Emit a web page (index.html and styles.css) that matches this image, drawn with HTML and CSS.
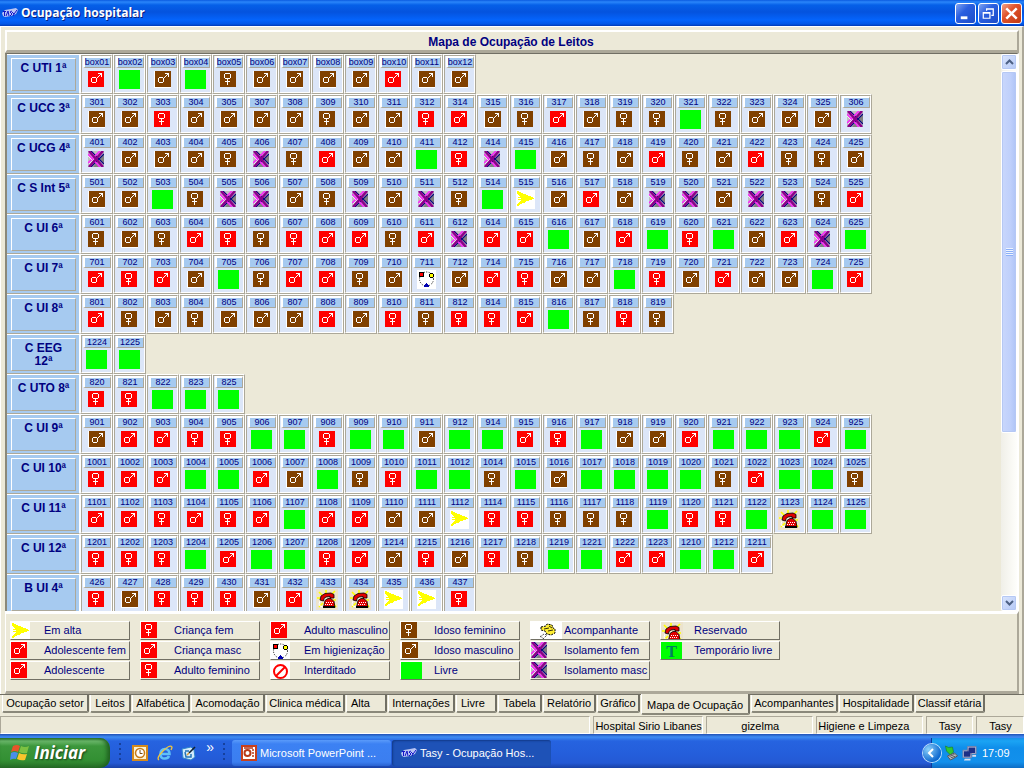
FILE: index.html
```
<!DOCTYPE html>
<html lang="pt-BR">
<head>
<meta charset="utf-8">
<title>Ocupação hospitalar</title>
<link rel="stylesheet" href="styles.css">
</head>
<body>
<svg class="sprite" aria-hidden="true">
  <symbol id="male" viewBox="0 0 16 16">
    <g fill="none" stroke="#fff" shape-rendering="crispEdges">
      <path d="M4 6.500h4M4 11.500h4M3.500 7v4M8.500 7v4"/>
      <path d="M9 6.500h1M10 5.500h1M11 4.500h1M12 3.500h1M10 2.500h4M13.500 2v4"/>
    </g>
  </symbol>
  <symbol id="female" viewBox="0 0 16 16">
    <g fill="none" stroke="#fff" shape-rendering="crispEdges">
      <path d="M5 2.500h5M5 7.500h5M4.500 3v4M10.500 3v4"/>
      <path d="M7.500 8v6M5 10.500h5"/>
    </g>
  </symbol>
  <symbol id="cross" viewBox="0 0 16 16">
    <path fill="#c0c0c0" d="M0 0h16v16H0z"/>
    <path fill="#808080" d="M10 8l6-5v10zM5 16l3-4 3 4z"/>
    <g fill="none">
      <path stroke="#000080" stroke-width="1.200" d="M3 0l13 13M16 3L3 16"/>
      <path stroke="#ff20ff" stroke-width="1.500" d="M0 3l12 13M12 0L0 12"/>
      <path stroke="#fff" stroke-width=".7" d="M0 5l4 4M2 0l5 5M1 13l5-5"/>
      <path stroke="#8a008a" stroke-width="2.600" d="M1 0l14 16M15 0L1 16"/>
    </g>
  </symbol>
  <symbol id="leave" viewBox="0 0 19 19">
    <path fill="#fff" d="M0 0h19v19H0z"/>
    <path fill="#ff0" shape-rendering="crispEdges" d="M1 1h2v1h2v1h2v1h3v1h2v1h3v1h2v1h1v1h-2v1h-3v1h-3v1H9v1H6v1H4v1H3v1H1v-2h1v-1h1v-1h1v-1h1v-1H2V9h3V8H2V7h2V6H3V5H2V4H1z"/>
  </symbol>
  <symbol id="clean" viewBox="0 0 19 19">
    <path fill="#fff" d="M0 0h19v19H0z"/>
    <circle cx="9.500" cy="9" r="7" fill="none" stroke="#000" stroke-dasharray="1 1.500"/>
    <g shape-rendering="crispEdges">
      <path fill="#000" d="M2 2h5v5H2z"/><path fill="#f00" d="M3 3h3v3H3z"/>
      <path fill="#000" d="M13 3h3v1h1v3h-1v1h-3V7h-1V4h1z"/><path fill="#ff0" d="M13 4h3v3h-3z"/>
      <path fill="#0000b0" d="M9 13h1v1h1v1h1v2H7v-2h1v-1h1z"/>
    </g>
  </symbol>
  <symbol id="phone" viewBox="0 0 22 21">
    <path fill="#ece3cc" d="M0 0h22v21H0z"/>
    <path stroke="#ff0" stroke-width="1.600" d="M3 3l4 4M10 1v4M19 2l-4 4M17 11h3M17 14l3 4M3 18l4-4M1 9h3"/>
    <path fill="#e00000" stroke="#000" stroke-width=".8" d="M4 11l1-4 4-2.500 6-.5 3 1.500V9h-4V7.500L10 8 8 9.500 7.500 12z"/>
    <path fill="#e00000" stroke="#000" stroke-width=".8" d="M9 11.500l3-2h3l3 3 1 6H7.500z"/>
    <path fill="#000" d="M7 17h12v2H7z"/>
    <path fill="none" stroke="#fff" d="M4 12l-1 3 1 2 3 1"/>
    <path stroke="#fff" stroke-dasharray="1 1" d="M10 13.500h7M9 15.500h8"/>
  </symbol>
  <symbol id="forbidden" viewBox="0 0 19 19">
    <path fill="#fff" d="M0 0h19v19H0z"/>
    <circle cx="9.500" cy="9.500" r="6.500" fill="none" stroke="#f00" stroke-width="2"/>
    <path stroke="#f00" stroke-width="2" d="M5 14l9-9"/>
  </symbol>
  <symbol id="companion" viewBox="0 0 31 18">
    <path fill="#fff" d="M0 0h31v18H0z"/>
    <path fill="#fe3" stroke="#000" stroke-dasharray="2 1" d="M10 5l5-1 1-2 5 1 1 3 2 1v4l-4 2-4-1-2-3-4-1z"/>
    <path fill="none" stroke="#000" stroke-width=".8" d="M13 7l5-1M17 9l5-1M18 4l3 2"/>
    <path fill="none" stroke="#555" stroke-dasharray="2 1" d="M9 15l4-3 3 1-4 4M9 14l4 3"/>
  </symbol>
  <symbol id="tasy" viewBox="0 0 16 10">
    <path fill="#b9c4f4" d="M0 5l3-3 6-1 5-1 2 2-2 4-5 2-6 1-2-1z"/>
    <path fill="none" stroke="#1515c8" d="M1 3.500h3M2.500 4v4M4 8l2-5 1 5M10 3l-2 1 2 2-2 2M10 4l2 2 3-4M12 6l-1 2"/>
  </symbol>
</svg>

<header class="titlebar">
  <svg class="app-icon" viewBox="0 0 16 10"><use href="#tasy"/></svg>
  <h1>Ocupação hospitalar</h1>
  <button class="win-btn" aria-label="Minimizar"><svg viewBox="0 0 20 20"><path fill="#fff" d="M5 13h7v3H5z"/></svg></button>
  <button class="win-btn" aria-label="Restaurar"><svg viewBox="0 0 20 20"><path fill="none" stroke="#fff" stroke-width="1.300" d="M4.500 9h7v6h-7zM4 9.500h8M8 7V5h7v7h-2M8 5.500h7"/></svg></button>
  <button class="win-btn close" aria-label="Fechar"><svg viewBox="0 0 20 20"><path stroke="#fff" stroke-width="2.600" d="M4.500 4.500l11 11M15.500 4.500l-11 11"/></svg></button>
</header>

<main class="window">
  <h2 class="map-title">Mapa de Ocupação de Leitos</h2>
  <div class="map">
    <div class="wards" id="wards"></div>
    <div class="scrollbar">
      <button class="scroll-btn" aria-label="Rolar para cima"><svg viewBox="0 0 9 6"><path fill="none" stroke="#4d6185" stroke-width="2" d="M1 5l3.500-3.500L8 5"/></svg></button>
      <div class="thumb"><span class="grip"></span></div>
      <button class="scroll-btn down" aria-label="Rolar para baixo"><svg viewBox="0 0 9 6"><path fill="none" stroke="#4d6185" stroke-width="2" d="M1 1l3.500 3.500L8 1"/></svg></button>
    </div>
  </div>
  <section class="legend-panel" aria-label="Legenda">
    <ul class="legend" id="legend"></ul>
  </section>
</main>

<nav class="tabs">
  <button>Ocupação setor</button><button>Leitos</button><button>Alfabética</button><button>Acomodação</button><button>Clinica médica</button><button class="start">Alta</button><button>Internações</button><button class="start">Livre</button><button>Tabela</button><button>Relatório</button><button>Gráfico</button><button class="active">Mapa de Ocupação</button><button>Acompanhantes</button><button>Hospitalidade</button><button>Classif etária</button>
</nav>

<div class="status">
  <span></span><span>Hospital Sirio Libanes</span><span class="mid">gizelma</span><span>Higiene e Limpeza</span><span class="mid">Tasy</span><span class="mid">Tasy</span>
</div>

<footer class="taskbar">
  <button class="start-btn">
    <svg viewBox="0 0 20 18"><path fill="#e8542a" d="M3 2q4-2 7 0L8 8q-3-2-7 0z"/><path fill="#7cc142" d="M11 2q4 2 8 0l-2 7q-4 1-8-1z"/><path fill="#4a8ee8" d="M1 9q3-2 7 0l-2 6q-3-1-6 1z"/><path fill="#f9c52c" d="M9 9q4 2 8 1l-2 6q-4 1-8-1z"/></svg>
    <span>Iniciar</span>
  </button>
  <div class="quick">
    <span class="dots"></span>
    <a href="#" aria-label="Outlook"><svg viewBox="0 0 16 16"><path fill="#d58a1c" d="M0 0h16v16H0z"/><path fill="#fdf3d3" d="M2 2h12v12H2z"/><circle cx="8" cy="8" r="4.500" fill="#fff" stroke="#c77a18" stroke-width="1.500"/><path fill="none" stroke="#7b4a10" d="M8 5v3.500h2.500"/></svg></a>
    <a href="#" aria-label="Internet Explorer"><svg viewBox="0 0 16 16"><path fill="none" stroke="#5fc0f8" stroke-width="2.600" d="M4 9h8.500q0-5-4.500-5T3.500 9 8 13.500q3 0 4-2.500"/><path fill="none" stroke="#f2c43c" stroke-width="1.300" d="M2 15Q-1 13 6 6t9-4q0 1-1 3"/></svg></a>
    <a href="#" aria-label="Área de trabalho"><svg viewBox="0 0 16 16"><path fill="#d4ecfc" stroke="#2f86cc" d="M1 4l9-2 3 3 1 7-4 3-8-2z"/><path fill="none" stroke="#2476b8" stroke-width="1.500" d="M4 6h4M4 7l1 5h5V9"/><path stroke="#123" stroke-width="1.600" d="M8 8l6-6"/><path stroke="#e0a030" stroke-width="1.500" d="M6 10l2-2"/></svg></a>
    <span class="more">»</span>
    <span class="dots"></span>
  </div>
  <button class="task">
    <svg viewBox="0 0 16 16"><path fill="#c8401c" d="M0 0h16v16H0z"/><path fill="#fff" d="M2 2h12v12H2z"/><circle cx="6.500" cy="8" r="3" fill="none" stroke="#b83a1a" stroke-width="2"/><path stroke="#b83a1a" stroke-width="1.500" d="M11 5h2M11 8h2M11 11h2M3 3h9"/></svg>
    <span>Microsoft PowerPoint ...</span>
  </button>
  <button class="task current">
    <svg viewBox="0 0 16 10"><use href="#tasy"/></svg>
    <span>Tasy - Ocupação Hos...</span>
  </button>
  <div class="tray">
    <button class="chevron" aria-label="Mostrar ícones"><svg viewBox="0 0 18 18"><path fill="none" stroke="#fff" stroke-width="2" d="M10 5L6 9l4 4"/></svg></button>
    <svg viewBox="0 0 14 16"><path fill="#2fc832" stroke="#1b7a20" stroke-width=".6" d="M1 1l3 1.500L8 2l1 5-3 3-4-4z"/><path fill="#c7ccd0" stroke="#555" d="M3 11l7-3 3 3-7 4z"/><path stroke="#555" d="M5 11.500l5-2M6 13l5-2"/></svg>
    <svg viewBox="0 0 16 16"><path fill="#cfd4e6" stroke="#777fa6" d="M6 1h9v8H6zM1 5h9v8H1z"/><path fill="#1d2f86" d="M7 2h7v6H7zM2 6h7v6H2z"/><path fill="#d9deee" d="M3 14h6v2H2zM11 10h4v2h-4z"/></svg>
    <time>17:09</time>
  </div>
</footer>
<script src="app.js"></script>
</body>
</html>
```
FILE: styles.css
```
* { box-sizing: border-box; }

body {
  margin: 0;
  height: 100vh;
  display: flex;
  flex-direction: column;
  overflow: hidden;
  background: #ece9d8;
  color: #000;
  font: 11px/13px "Liberation Sans", Arial, sans-serif;
}

button { font: inherit; color: inherit; margin: 0; padding: 0; border: 0; background: none; }
svg { display: block; flex: none; }
.sprite { position: absolute; width: 0; height: 0; }

/* title bar */
.titlebar {
  flex: none;
  height: 26px;
  display: flex;
  align-items: center;
  gap: 2px;
  padding: 0 2px;
  background: linear-gradient(#0a5be0 0, #2a86fa 2px, #0560e8 5px, #0453de 12px, #0464fc 20px, #0357e6 24px, #0139b4);
}
.app-icon { width: 16px; height: 10px; }
.titlebar h1 {
  flex: 1;
  margin: 0 0 0 1px;
  color: #fff;
  font: bold 12px/18px "Open Sans", sans-serif;
  text-shadow: 1px 1px #0a1f80;
}
.win-btn {
  width: 21px;
  height: 21px;
  border: 1px solid #fff;
  border-radius: 3px;
  background: linear-gradient(135deg, #7fa4f2, #2a5fe0 40%, #1c4cc8);
}
.win-btn svg { width: 19px; height: 19px; }
.win-btn.close { background: linear-gradient(135deg, #f0a288, #e0532c 40%, #c23a12); }

/* window body */
.window {
  flex: 1;
  min-height: 0;
  display: flex;
  flex-direction: column;
  padding: 3px 3px 0 4px;
  border: solid #fff;
  border-width: 1px 0 0 1px;
  border-right: 2px solid #aca899;
}
.map-title {
  flex: none;
  margin: 0;
  height: 23px;
  padding-right: 2px;
  border: solid;
  border-width: 2px 2px 3px;
  border-color: #fff #aca899 #aca899 #fff;
  color: #000080;
  text-align: center;
  font: bold 12px/20px "Liberation Sans", Arial, sans-serif;
}
.map {
  flex: 1;
  min-height: 0;
  display: flex;
  border: solid #716f64;
  border-width: 1px 0 0 2px;
  border-left-color: #8a887a;
  border-right: 2px solid #fff;
}
.wards { flex: 1; min-width: 0; overflow: hidden; }
.ward { display: flex; height: 40px; }
.ward-name {
  flex: none;
  width: 73px;
  padding: 3px 3px 2px 4px;
  background: #a6caf0;
  border: solid #fff;
  border-width: 1px 1px 0 0;
  border-bottom: 1px solid #aca899;
}
.ward-name h3 {
  height: 33px;
  margin: 0;
  padding: 3px 4px;
  border: 1px solid;
  border-color: #fff #aca899 #aca899 #fff;
  color: #000080;
  text-align: center;
  font: bold 12px/13px "Liberation Sans", Arial, sans-serif;
}
.bed {
  flex: none;
  width: 33px;
  background: #dce6f8;
  border: 1px solid;
  border-color: #fff #aca899 #aca899 #fff;
}
.bed-box {
  height: 38px;
  border: 1px solid;
  border-color: #aca899 #fff #fff #aca899;
  display: flex;
  flex-direction: column;
  align-items: center;
}
.bed-no {
  width: 28px;
  height: 12px;
  border: solid;
  border-width: 2px 1px 1px 2px;
  border-color: #fff #aca899 #aca899 #fff;
  background: #a6caf0;
  color: #000080;
  display: flex;
  justify-content: center;
  font-size: 9px;
  line-height: 9px;
}
.bed-icon { flex: 1; display: flex; align-items: center; padding: 0 1px 2px 0; }

/* status marks shared by beds and legend */
.mark { display: block; width: 16px; height: 16px; }
.red { background: #f00; }
.brown { background: #804000; }
.brown.m { width: 17px; height: 17px; border: solid #fff; border-width: 0 0 1px 1px; }
.free { width: 21px; height: 19px; background: #0f0; }
.cross { width: 16px; height: 16px; }
.leave, .clean, .forbidden { width: 19px; height: 19px; }
.phone { width: 22px; height: 21px; }
.companion { width: 31px; height: 18px; }
.temp { color: #008060; font: bold 16px/19px "Liberation Serif", serif; text-align: center; }

/* scrollbar */
.scrollbar {
  flex: none;
  width: 16px;
  display: flex;
  flex-direction: column;
  gap: 1px;
  background: linear-gradient(90deg, #f0efe8, #fefefb);
}
.scroll-btn {
  flex: none;
  height: 16px;
  display: grid;
  place-items: center;
  border: 1px solid #fff;
  border-radius: 2px;
  background: linear-gradient(135deg, #dbe6fe, #b4c8f6);
  box-shadow: inset 0 0 0 1px #b5c8f4;
}
.scroll-btn svg { width: 9px; height: 6px; }
.scroll-btn.down { margin-top: auto; }
.thumb {
  flex: none;
  height: 65%;
  display: grid;
  place-items: center;
  border: 1px solid #fff;
  border-radius: 2px;
  background: linear-gradient(90deg, #c9d7fc, #bfd0fb 60%, #aec4f6);
  box-shadow: inset 0 0 0 1px #b5c8f4;
}
.grip { width: 7px; height: 8px; background: repeating-linear-gradient(#eef4fe 0 1px, #8cb0f8 1px 2px); }

/* legend */
.legend-panel {
  flex: none;
  height: 83px;
  border: solid;
  border-width: 3px 2px 3px 1px;
  border-color: #fff #aca899 #aca899 #fff;
  padding: 7px 4px;
}
.legend {
  list-style: none;
  margin: 0;
  padding: 0;
  display: grid;
  grid-auto-flow: column;
  grid-template-rows: repeat(3, 19px);
  grid-auto-columns: 120px;
  gap: 1px 10px;
}
.legend li {
  display: grid;
  grid-template-columns: 33px 1fr;
  overflow: hidden;
  border: 1px solid;
  border-color: #fff #716f64 #716f64 #fff;
  color: #000080;
  line-height: 16px;
  white-space: nowrap;
}

/* page tabs */
.tabs {
  flex: none;
  height: 22px;
  display: grid;
  grid-template-columns: 88px 42px 59px 75px 80px 42px 68px 42px 45px 54px 44px 110px 88px 76px 71px;
  align-items: start;
  padding-left: 2px;
  border-top: 1px solid #716f64;
}
.tabs button {
  height: 18px;
  margin-right: 1px;
  padding-top: 1px;
  border: solid;
  border-width: 0 2px 2px 1px;
  border-color: #fff #716f64 #8a887a #fff;
  border-radius: 0 0 2px 2px;
  text-align: center;
  white-space: nowrap;
}
.tabs .start { text-align: left; padding-left: 4px; }
.tabs .active { height: 21px; padding-top: 3px; margin-top: -1px; background: #ece9d8; }

/* status bar */
.status {
  flex: none;
  height: 18px;
  display: grid;
  grid-template-columns: 591fr 110fr 107fr 107fr 47fr 48fr;
  gap: 3px;
}
.status span {
  overflow: hidden;
  padding-left: 1px;
  border: 1px solid;
  border-color: #aca899 #fff #fff #aca899;
  line-height: 18px;
  white-space: nowrap;
}
.status .mid { text-align: center; }

/* taskbar */
.taskbar {
  flex: none;
  height: 34px;
  display: flex;
  align-items: stretch;
  color: #fff;
  background: linear-gradient(#1f4fb4 0, #3f8cf3 3px, #2663e0 7px, #245edb 20px, #2459d4 29px, #1941a5);
}
.start-btn {
  width: 110px;
  margin-top: 4px;
  padding: 0 10px;
  display: flex;
  align-items: center;
  gap: 4px;
  border-radius: 0 10px 10px 0;
  background: linear-gradient(#2f7a2f 0, #6cb86c 3px, #3c973c 8px, #339033 22px, #276f27);
  box-shadow: inset -3px 0 4px #1f6020;
  font: italic bold 17px/22px "Open Sans", sans-serif;
  text-shadow: 1px 1px 2px #163d16;
}
.start-btn svg { width: 20px; height: 18px; }
.quick { display: flex; align-items: center; justify-content: space-between; padding: 3px 5px 0 9px; width: 122px; }
.quick svg { width: 16px; height: 16px; }
.dots { width: 4px; height: 20px; background: radial-gradient(circle at 1px 1px, #16409c 1px, transparent 1px) 0 0 / 4px 5px; }
.more { font-size: 14px; line-height: 14px; margin-bottom: 12px; }
.task {
  width: 159px;
  height: 26px;
  margin: 6px 1px 0 0;
  padding: 0 9px;
  display: flex;
  align-items: center;
  gap: 3px;
  border-radius: 3px;
  background: linear-gradient(#5a9bfa, #3c81f3 4px, #3b7ef0 22px, #2a62d0);
  white-space: nowrap;
}
.task svg { width: 16px; }
.task.current { background: #1e52b7; box-shadow: inset 1px 1px 2px #123a88; }
.tray {
  margin-left: auto;
  width: 93px;
  margin-top: 4px;
  display: flex;
  align-items: center;
  gap: 3px;
  border-left: 1px solid #0b3c9c;
  background: linear-gradient(#1890e8 0, #1ba4f4 3px, #0f8eea 10px, #1290ec 24px, #0d6cc4);
}
.chevron { width: 18px; height: 18px; margin-left: -9px; border-radius: 50%; background: radial-gradient(circle at 30% 30%, #8cd0fa, #0f6ad0 70%); box-shadow: 0 0 0 1px #bfe0fb; }
.tray svg { width: 15px; height: 16px; }
.tray .chevron svg { width: 18px; height: 18px; }
.tray time { margin-left: 2px; }
```
FILE: app.js
```
// m/f: adult male/female, M/F: elderly male/female, g: free, x: isolation,
// a: discharge, h: cleaning, t: reserved
const wards = [
  ["C UTI 1ª", "box01m box02g box03M box04g box05F box06M box07M box08M box09M box10m box11M box12M"],
  ["C UCC 3ª", "301M 302M 303f 304M 305M 307M 308M 309F 310M 311M 312f 314m 315M 316F 317m 318M 319F 320F 321g 322F 323M 324M 325M 306x"],
  ["C UCG 4ª", "401x 402M 403M 404M 405F 406x 407F 408m 409M 410M 411g 412f 414x 415g 416M 417F 418M 419m 420F 421M 422m 423F 424F 425M"],
  ["C S Int 5ª", "501M 502M 503g 504F 505x 506x 507M 508F 509x 510M 511x 512F 514g 515a 516M 517m 518M 519x 520x 521M 522x 523x 524F 525m"],
  ["C UI 6ª", "601F 602M 603F 604m 605f 606F 607f 608m 609m 610F 611m 612x 614m 615m 616g 617M 618m 619g 620f 621g 622M 623m 624x 625g"],
  ["C UI 7ª", "701m 702f 703m 704M 705g 706F 707m 708m 709F 710M 711h 712M 714m 715f 716M 717M 718g 719f 720M 721m 722M 723M 724g 725m"],
  ["C UI 8ª", "801m 802F 803M 804F 805M 806M 807M 808m 809M 810f 811F 812f 814f 815m 816g 817F 818f 819F"],
  ["C EEG 12ª", "1224g 1225g"],
  ["C UTO 8ª", "820f 821f 822g 823g 825g"],
  ["C UI 9ª", "901M 902m 903m 904f 905f 906g 907g 908f 909g 910g 911M 912g 914g 915m 916f 917g 918M 919M 920m 921g 922g 923g 924m 925g"],
  ["C UI 10ª", "1001f 1002m 1003m 1004g 1005g 1006m 1007M 1008g 1009F 1010f 1011g 1012g 1014F 1015g 1016M 1017g 1018g 1019g 1020g 1021F 1022m 1023g 1024g 1025F"],
  ["C UI 11ª", "1101m 1102m 1103f 1104m 1105f 1106m 1107g 1108m 1109m 1110M 1111M 1112a 1114f 1115f 1116F 1117F 1118F 1119g 1120f 1121f 1122g 1123t 1124g 1125g"],
  ["C UI 12ª", "1201f 1202f 1203f 1204g 1205m 1206g 1207g 1208f 1209m 1214M 1215f 1216M 1217f 1218F 1219g 1221g 1222m 1223m 1210g 1212g 1211m"],
  ["B UI 4ª", "426f 427M 428f 429f 430f 431M 432m 433t 434t 435a 436a 437f"]
];

const legend = [
  ["a", "Em alta"], ["m", "Adolescente fem"], ["m", "Adolescente"],
  ["f", "Criança fem"], ["m", "Criança masc"], ["f", "Adulto feminino"],
  ["m", "Adulto masculino"], ["h", "Em higienização"], ["i", "Interditado"],
  ["F", "Idoso feminino"], ["M", "Idoso masculino"], ["g", "Livre"],
  ["c", "Acompanhante"], ["x", "Isolamento fem"], ["x", "Isolamento masc"],
  ["t", "Reservado"], ["T", "Temporário livre"]
];

const marks = {
  m: ["male", "red m"], f: ["female", "red"], M: ["male", "brown m"], F: ["female", "brown"],
  x: ["cross", "cross"], a: ["leave", "leave"], h: ["clean", "clean"], t: ["phone", "phone"],
  i: ["forbidden", "forbidden"], c: ["companion", "companion"]
};

function mark(code) {
  if (code === "g") return '<span class="mark free"></span>';
  if (code === "T") return '<span class="mark free temp">T</span>';
  const [id, cls] = marks[code];
  return `<svg class="mark ${cls}"><use href="#${id}"/></svg>`;
}

document.getElementById("wards").innerHTML = wards.map(([name, beds]) =>
  `<section class="ward"><div class="ward-name"><h3>${name}</h3></div>` +
  beds.split(" ").map(b =>
    `<div class="bed"><div class="bed-box"><span class="bed-no">${b.slice(0, -1)}</span>` +
    `<span class="bed-icon">${mark(b.slice(-1))}</span></div></div>`).join("") +
  "</section>").join("");

document.getElementById("legend").innerHTML = legend.map(([code, text]) =>
  `<li>${mark(code)}<span>${text}</span></li>`).join("");
```
